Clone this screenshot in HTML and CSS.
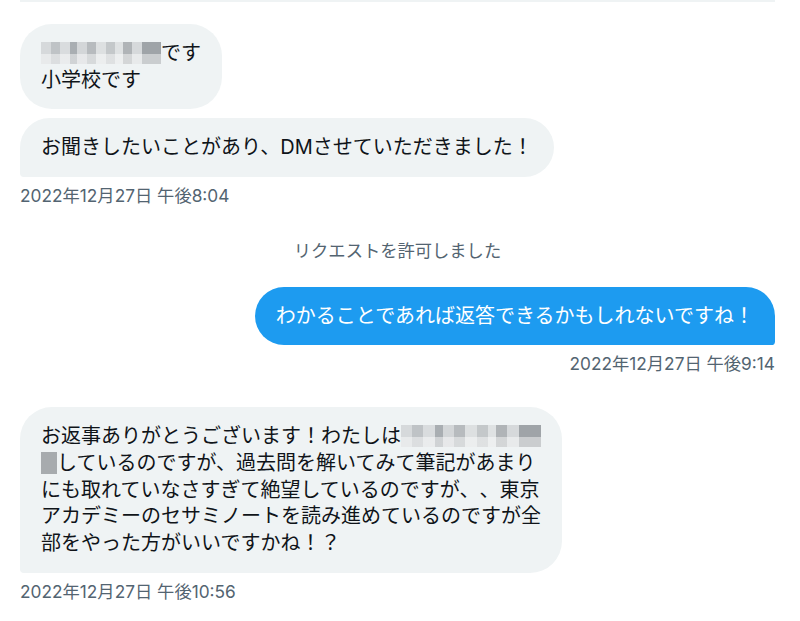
FILE: index.html
```html
<!DOCTYPE html>
<html lang="ja">
<head>
    <meta charset="UTF-8">
    <meta name="viewport" content="width=device-width, initial-scale=1.0">
    <title>メッセージ</title>
    <link rel="stylesheet" href="styles.css">
</head>
<body>
    <div id="conversation">
        <div class="divider"></div>

        <div class="group received">
            <div class="bubble"><span class="blur blur-name"></span>です<br>小学校です</div>
            <div class="bubble last">お聞きしたいことがあり、DMさせていただきました！</div>
            <div class="timestamp">2022年12月27日 午後8:04</div>
        </div>

        <div class="notice">リクエストを許可しました</div>

        <div class="group sent">
            <div class="bubble last">わかることであれば返答できるかもしれないですね！</div>
            <div class="timestamp">2022年12月27日 午後9:14</div>
        </div>

        <div class="group received">
            <div class="bubble last tall">お返事ありがとうございます！わたしは<span class="blur blur-long"></span><br><span class="blur blur-short"></span>しているのですが、過去問を解いてみて筆記があまり<br>にも取れていなさすぎて絶望しているのですが、、東京<br>アカデミーのセサミノートを読み進めているのですが全<br>部をやった方がいいですかね！？</div>
            <div class="timestamp">2022年12月27日 午後10:56</div>
        </div>
    </div>
</body>
</html>
```

FILE: styles.css
```css
body {
    margin: 0;
    background-color: #fff;
    font-family: Inter, "Noto Sans CJK JP", sans-serif;
    color: #0f1419;
    text-spacing-trim: space-all;
}
#conversation {
    padding: 0 25px 20px 20px;
}
.divider {
    height: 2px;
    background-color: #eff3f4;
}
.group {
    display: flex;
    flex-direction: column;
    gap: 9px;
}
.group.received {
    align-items: flex-start;
    margin-top: 22px;
}
.group.sent {
    align-items: flex-end;
    margin-top: 26px;
}
.group.received + .notice {
    margin-top: 35px;
}
.notice + .group.received,
.group.sent + .group.received {
    margin-top: 33px;
}
.bubble {
    font-size: 20px;
    line-height: 26.6px;
    padding: 16px 21px;
    border-radius: 32px;
    background-color: #eff3f4;
    white-space: nowrap;
}
.bubble.tall {
    padding-bottom: 17px;
}
.received .bubble.last {
    border-bottom-left-radius: 4px;
}
.sent .bubble {
    background-color: #1d9bf0;
    color: #fff;
}
.sent .bubble.last {
    border-bottom-right-radius: 4px;
}
.timestamp {
    font-size: 17.3px;
    line-height: 20px;
    color: #536471;
}
.notice {
    text-align: center;
    font-size: 17.3px;
    line-height: 20px;
    color: #536471;
}
.blur {
    display: inline-block;
    vertical-align: -4px;
    height: 22px;
    background:
        linear-gradient(180deg, rgba(255,255,255,0) 0 55%, rgba(255,255,255,0.45) 55% 100%),
        linear-gradient(90deg, #d6d9db 0 8%, #bfc3c6 8% 16%, #d9dcde 16% 24%, #a9aeb2 24% 30%, #d3d6d8 30% 38%, #b7bbbe 38% 46%, #dde0e1 46% 54%, #c4c8ca 54% 62%, #dfe2e3 62% 68%, #b0b4b7 68% 76%, #d6d9db 76% 84%, #9fa4a8 84% 100%);
}
.blur-name {
    width: 120px;
}
.blur-long {
    width: 140px;
}
.blur-short {
    width: 16px;
    background: #a7abae;
}
```
